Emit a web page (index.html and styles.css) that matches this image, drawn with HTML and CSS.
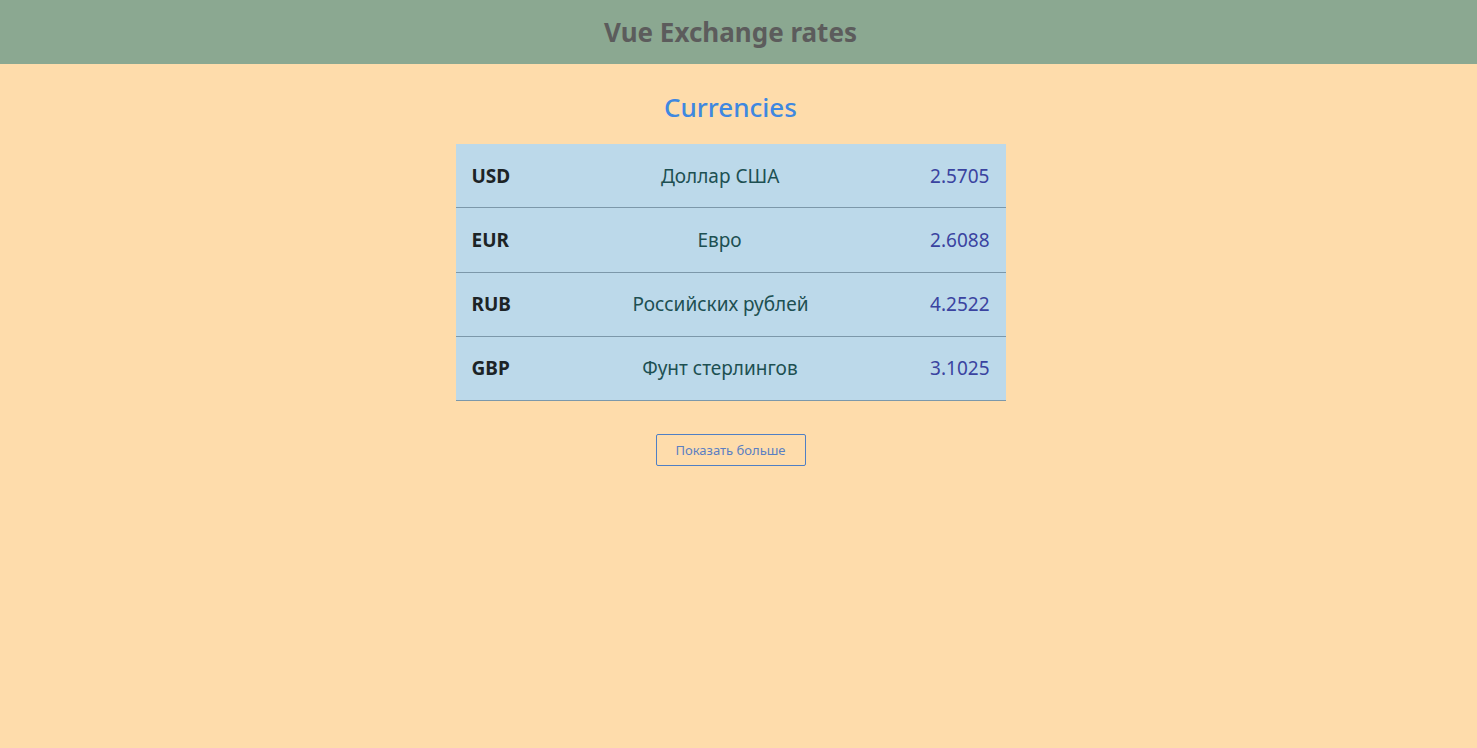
FILE: index.html
```html
<!DOCTYPE html>
<html lang="ru">
<head>
<meta charset="utf-8">
<title>Vue Exchange rates</title>
<link rel="stylesheet" href="styles.css">
</head>
<body>
<header class="header">
  <h1 class="header-title">Vue Exchange rates</h1>
</header>
<main class="main">
  <h2 class="section-title">Currencies</h2>
  <ul class="rates">
    <li class="rate-row"><span class="code">USD</span><span class="name">Доллар США</span><span class="value">2.5705</span></li>
    <li class="rate-row"><span class="code">EUR</span><span class="name">Евро</span><span class="value">2.6088</span></li>
    <li class="rate-row"><span class="code">RUB</span><span class="name">Российских рублей</span><span class="value">4.2522</span></li>
    <li class="rate-row"><span class="code">GBP</span><span class="name">Фунт стерлингов</span><span class="value">3.1025</span></li>
  </ul>
  <button class="more-btn" type="button">Показать больше</button>
</main>
</body>
</html>
```
FILE: styles.css
```css
html, body {
  margin: 0;
  padding: 0;
}
body {
  background: #fedcab;
  font-family: "Noto Sans", "Open Sans", sans-serif;
  min-height: 748px;
}
.header {
  background: #8ba891;
  height: 64px;
  padding-right: 16px;
  display: flex;
  align-items: center;
  justify-content: center;
}
.header-title {
  margin: 0 0 1px;
  font-size: 26px;
  font-weight: 700;
  color: #5c5c5c;
}
.main {
  padding-right: 16px;
  display: flex;
  flex-direction: column;
  align-items: center;
}
.section-title {
  margin: 25px 0 19px;
  font-size: 26px;
  line-height: 36px;
  font-weight: 500;
  color: #3f88e0;
}
.rates {
  list-style: none;
  margin: 0;
  padding: 0;
  width: 550px;
  background: #bcd9ea;
}
.rate-row {
  display: flex;
  justify-content: space-between;
  align-items: center;
  height: 63.25px;
  padding: 0 16px;
  border-bottom: 1px solid #7c98aa;
  font-size: 19px;
}
.code {
  font-weight: 700;
  color: #1c2426;
}
.name {
  color: #1d5052;
}
.value {
  color: #3a43a0;
}
.more-btn {
  margin-top: 33px;
  width: 150px;
  height: 32px;
  background: transparent;
  border: 1px solid #4f7fc4;
  border-radius: 2px;
  color: #5b7fc2;
  font-family: inherit;
  font-size: 13px;
  cursor: pointer;
}
```
